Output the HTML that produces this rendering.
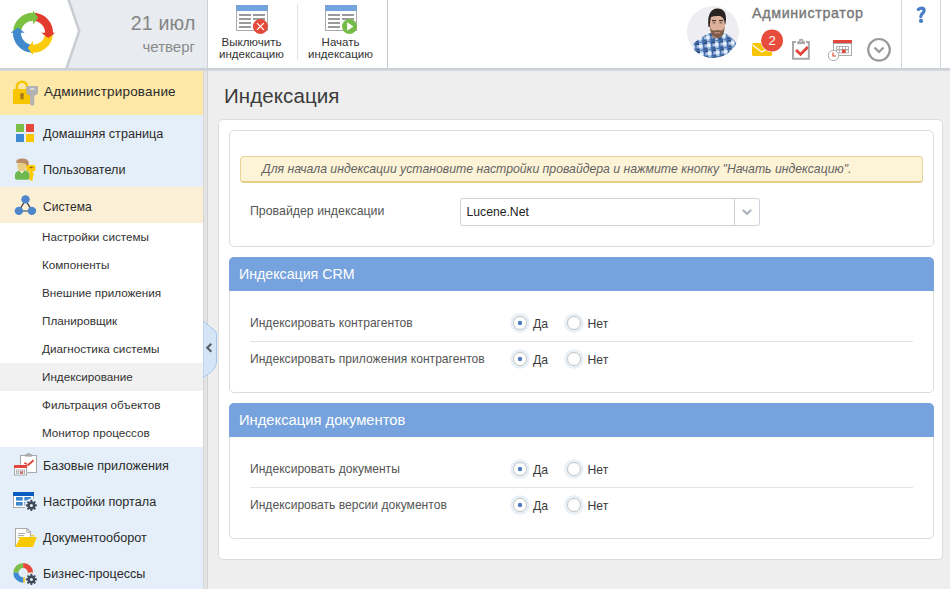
<!DOCTYPE html>
<html><head><meta charset="utf-8">
<style>
*{box-sizing:border-box}
html,body{margin:0;padding:0}
body{width:950px;height:589px;overflow:hidden;position:relative;background:#eeeeee;font-family:"Liberation Sans",sans-serif;color:#333}
.a{position:absolute}
.t{position:absolute;white-space:nowrap;line-height:1}
</style></head><body>

<!-- HEADER -->
<div class="a" style="left:0;top:0;width:950px;height:68px;background:#fff"></div>
<svg class="a" style="left:0;top:0" width="950" height="71" viewBox="0 0 950 71">
  <polygon points="68,0 207,0 207,68 66,68 79,31" fill="#e8ebef"/>
  <polyline points="68.3,-1 79.3,31 66.3,69" fill="none" stroke="#cacdd2" stroke-width="2.6"/>
  <rect x="207" y="0" width="1" height="68" fill="#cdd0d5"/>
  <rect x="297" y="4" width="1" height="56" fill="#e1e3e6"/>
  <rect x="387" y="0" width="1" height="68" fill="#c8ccd1"/>
  <rect x="901" y="0" width="1" height="68" fill="#d3d6da"/>
  <rect x="940" y="0" width="1" height="68" fill="#d3d6da"/>
  <rect x="0" y="68" width="950" height="2" fill="#cdd1d6"/>
  <rect x="0" y="70" width="950" height="1" fill="#d6dbe1"/>
  <!-- logo -->
  <path d="M17.04 31.68A16 16 0 0 1 33.84 16.82" stroke="#7cc142" stroke-width="8" fill="none"/>
  <path d="M34.12 16.84A16 16 0 0 1 48.98 33.64" stroke="#e23b2e" stroke-width="8" fill="none"/>
  <path d="M48.96 33.92A16 16 0 0 1 32.16 48.78" stroke="#fccb0b" stroke-width="8" fill="none"/>
  <path d="M31.88 48.76A16 16 0 0 1 17.02 31.96" stroke="#3f89cc" stroke-width="8" fill="none"/>
  <path d="M33.00 24.50L33.00 10.50L38.21 17.67Z" fill="#7cc142"/>
  <path d="M41.30 32.80L55.30 32.80L48.13 38.01Z" fill="#e23b2e"/>
  <path d="M33.00 41.10L33.00 55.10L27.79 47.93Z" fill="#fccb0b"/>
  <path d="M24.70 32.80L10.70 32.80L17.87 27.59Z" fill="#3f89cc"/>

  <!-- toolbar icon 1 -->
  <g transform="translate(236,5)">
    <rect x="0.5" y="0.5" width="31" height="25" fill="#fff" stroke="#a9abad"/>
    <rect x="0" y="0" width="32" height="6" fill="#74a3de" rx="1"/>
    <rect x="3" y="9" width="12" height="2" fill="#999b9d"/>
    <rect x="17" y="9" width="12" height="2" fill="#999b9d"/>
    <rect x="3" y="13" width="12" height="2" fill="#999b9d"/>
    <rect x="17" y="13" width="12" height="2" fill="#999b9d"/>
    <rect x="3" y="17" width="12" height="2" fill="#999b9d"/>
    <rect x="3" y="21" width="12" height="2" fill="#999b9d"/>
    <circle cx="24.4" cy="21.5" r="7.5" fill="#e44b3b"/>
    <path d="M21 18.1L27.8 24.9M27.8 18.1L21 24.9" stroke="#fff" stroke-width="1.3"/>
  </g>
  <!-- toolbar icon 2 -->
  <g transform="translate(325,5)">
    <rect x="0.5" y="0.5" width="31" height="25" fill="#fff" stroke="#a9abad"/>
    <rect x="0" y="0" width="32" height="6" fill="#74a3de" rx="1"/>
    <rect x="3" y="9" width="12" height="2" fill="#999b9d"/>
    <rect x="17" y="9" width="12" height="2" fill="#999b9d"/>
    <rect x="3" y="13" width="12" height="2" fill="#999b9d"/>
    <rect x="17" y="13" width="12" height="2" fill="#999b9d"/>
    <rect x="3" y="17" width="12" height="2" fill="#999b9d"/>
    <rect x="3" y="21" width="12" height="2" fill="#999b9d"/>
    <circle cx="24.5" cy="21.5" r="7.5" fill="#75bb48"/>
    <path d="M22.2 17.2L28.5 21.5L22.2 25.8Z" fill="#fff"/>
  </g>
</svg>

<div class="t" style="left:100px;width:95.5px;text-align:right;top:14px;font-size:19.5px;color:#858585;letter-spacing:0.2px">21 июл</div>
<div class="t" style="left:100px;width:95px;text-align:right;top:38.5px;font-size:15px;color:#8a8a8a">четверг</div>

<div class="t" style="left:207px;width:89px;text-align:center;top:36.3px;font-size:11.5px;color:#333;line-height:12px">Выключить<br>индексацию</div>
<div class="t" style="left:296px;width:89px;text-align:center;top:36.3px;font-size:11.5px;color:#333;line-height:12px">Начать<br>индексацию</div>


<!-- right header -->
<svg class="a" style="left:687px;top:6px" width="52" height="52" viewBox="0 0 52 52">
  <defs><clipPath id="av"><circle cx="26" cy="26" r="26"/></clipPath>
  <pattern id="plaid" width="8" height="8" patternUnits="userSpaceOnUse" patternTransform="rotate(-6)">
    <rect width="8" height="8" fill="#5a82bb"/>
    <rect x="0" y="0" width="8" height="3" fill="#a9c4e6"/>
    <rect x="0" y="0" width="3" height="8" fill="#adc8ea"/>
    <rect x="0" y="0" width="3" height="3" fill="#eef4fb"/>
    <rect x="4" y="4" width="4" height="4" fill="#2a4a7c"/>
    <rect x="4" y="0" width="1.3" height="8" fill="#3c62a0"/>
    <rect x="0" y="5" width="8" height="1" fill="#4d74b0"/>
  </pattern></defs>
  <g clip-path="url(#av)">
    <rect width="52" height="52" fill="#eeeef2"/>
    <path d="M3 52 L6 38 Q12 32 23 27 L37 27 Q45 30 49 37 L52 52Z" fill="url(#plaid)"/>
    <path d="M23 27 L27 34 L30 31 L33 34 L37 27Z" fill="#1f3660" opacity="0.6"/>
    <path d="M25.5 25 L25.5 31 Q30 34 34.5 30 L34.5 25Z" fill="#c39680"/>
    <path d="M22.5 17 Q22 8 30 8 Q38 8 38 17 Q38 25 35 29 Q32 31.5 30 31.5 Q27 31.5 25 29 Q22.5 25 22.5 17Z" fill="#dcb09a"/>
    <path d="M23 20 Q23.5 28 26 30 Q28 32 30.5 32 Q33 32 35 30 Q37.5 27 37.5 20 Q36.5 25 34 24.5 Q30.5 23.5 27 24.5 Q24 25 23 20Z" fill="#7d5d4a"/>
    <path d="M27 26.5 Q30.5 25.5 33.5 26.5 L33 27.5 Q30.5 27 27.5 27.5Z" fill="#c99a86"/>
    <rect x="25" y="14" width="4" height="1.1" fill="#3a2c26"/>
    <rect x="32" y="14" width="4" height="1.1" fill="#3a2c26"/>
    <rect x="25.8" y="16.3" width="2.5" height="1" fill="#5a463e"/>
    <rect x="32.6" y="16.3" width="2.5" height="1" fill="#5a463e"/>
    <path d="M21.5 21 Q19.5 5 29 2.5 Q39.5 1.5 39 14 Q38.5 18 38 19 Q37.5 11 33 10 Q27 9.5 24 11 Q23 15 22.8 21Z" fill="#2b2321"/>
  </g>
</svg>
<div class="t" style="left:752px;top:5.5px;font-size:14.3px;letter-spacing:0.65px;-webkit-text-stroke:0.35px #777;color:#777">Администратор</div>

<svg class="a" style="left:745px;top:28px" width="150" height="36" viewBox="745 28 150 36">
  <!-- envelope -->
  <rect x="752" y="43" width="20" height="13" rx="1.5" fill="#f8c600"/>
  <path d="M752.5 45 L761 51.5 Q762 52.3 763 51.5 L771.5 45" stroke="#fff" stroke-width="1.2" fill="none"/>
  <circle cx="772" cy="40.5" r="11.5" fill="#fff"/>
  <circle cx="772" cy="40.5" r="11" fill="#e74c3c"/>
  <!-- clipboard -->
  <path d="M796 42.1 L793 42.1 L793 58.8 L808.8 58.8 L808.8 42.1 L806 42.1" fill="none" stroke="#a8a8a8" stroke-width="2"/>
  <rect x="797.2" y="41.2" width="7.8" height="2.9" fill="#a8a8a8"/>
  <rect x="799" y="39" width="4.2" height="2.5" rx="0.8" fill="#a8a8a8"/>
  <rect x="800.3" y="40.7" width="1.6" height="1.2" fill="#e8e8e8"/>
  <path d="M796 50 L800.6 54.3 L807.8 47" stroke="#e0453a" stroke-width="2.8" fill="none"/>
  <!-- calendar -->
  <rect x="833" y="40" width="19" height="4" fill="#e4463b"/>
  <rect x="833.5" y="43.5" width="18" height="12" fill="#fff" stroke="#aaa"/>
  <rect x="836" y="46" width="13" height="7.5" fill="#b4b4b4"/>
  <g fill="#fff">
    <rect x="837" y="47" width="2" height="2"/><rect x="840" y="47" width="2" height="2"/><rect x="843" y="47" width="2" height="2"/><rect x="846" y="47" width="2" height="2"/>
    <rect x="837" y="50.5" width="2" height="2"/><rect x="840" y="50.5" width="2" height="2"/><rect x="846" y="50.5" width="2" height="2"/>
  </g>
  <rect x="842" y="49.5" width="3.5" height="3.5" fill="#e4463b"/>
  <circle cx="833.5" cy="55.5" r="5.2" fill="#fff" stroke="#aaa" stroke-width="1"/>
  <path d="M833 52.5 L833 56 L836 56" stroke="#e4463b" stroke-width="1.2" fill="none"/>
  <!-- circle chevron -->
  <circle cx="879" cy="49.8" r="10.8" fill="none" stroke="#999" stroke-width="2.2"/>
  <path d="M874.5 47.5 L879 52 L883.5 47.5" stroke="#999" stroke-width="2.2" fill="none"/>
</svg>
<div class="t" style="left:761px;top:34px;width:22px;text-align:center;font-size:13px;color:#fff">2</div>
<svg class="a" style="left:905px;top:0" width="30" height="30" viewBox="0 0 30 30"><path d="M13.3 9.4 Q15 8 17 8.1 Q19.2 8.3 19.1 10.6 Q19 12.1 17.4 13.4 Q15.7 14.8 15.8 16.6" stroke="#4a7ec6" stroke-width="3.2" fill="none" stroke-linecap="round"/><circle cx="16" cy="20.9" r="2.1" fill="#4a7ec6"/></svg>


<!-- SIDEBAR -->
<div class="a" style="left:0;top:71px;width:203px;height:44px;background:#fde8a8"></div>
<div class="a" style="left:0;top:115px;width:203px;height:72px;background:#e5eff9"></div>
<div class="a" style="left:0;top:187px;width:203px;height:36px;background:#fbefd6"></div>
<div class="a" style="left:0;top:223px;width:203px;height:224px;background:#fff"></div>
<div class="a" style="left:0;top:363px;width:203px;height:28px;background:#f1f1f1"></div>
<div class="a" style="left:0;top:447px;width:203px;height:142px;background:#e5eff9"></div>
<div class="a" style="left:203px;top:71px;width:1px;height:518px;background:#d6d6d6"></div>
<div class="a" style="left:204px;top:71px;width:3px;height:518px;background:#e4e4e4"></div>
<div class="a" style="left:207px;top:71px;width:1px;height:518px;background:#d2d2d2"></div>

<div class="t" style="left:44px;top:85px;font-size:13.5px;letter-spacing:0.18px;color:#2b2b2b">Администрирование</div>
<div class="t" style="left:43px;top:128px;font-size:12.65px;color:#2b2b2b">Домашняя страница</div>
<div class="t" style="left:43px;top:164px;font-size:12.65px;color:#2b2b2b">Пользователи</div>
<div class="t" style="left:43px;top:200.5px;font-size:12.1px;color:#2b2b2b">Система</div>
<div class="t" style="left:42px;top:230.5px;font-size:11.7px;color:#333">Настройки системы</div>
<div class="t" style="left:42px;top:258.5px;font-size:11.7px;color:#333">Компоненты</div>
<div class="t" style="left:42px;top:286.5px;font-size:11.7px;color:#333">Внешние приложения</div>
<div class="t" style="left:42px;top:314.5px;font-size:11.7px;color:#333">Планировщик</div>
<div class="t" style="left:42px;top:342.5px;font-size:11.7px;color:#333">Диагностика системы</div>
<div class="t" style="left:42px;top:370.5px;font-size:11.7px;color:#333">Индексирование</div>
<div class="t" style="left:42px;top:398.5px;font-size:11.7px;color:#333">Фильтрация объектов</div>
<div class="t" style="left:42px;top:426.5px;font-size:11.7px;color:#333">Монитор процессов</div>
<div class="t" style="left:43px;top:460px;font-size:12.65px;color:#2b2b2b">Базовые приложения</div>
<div class="t" style="left:43px;top:496px;font-size:12.65px;color:#2b2b2b">Настройки портала</div>
<div class="t" style="left:43px;top:532px;font-size:12.65px;color:#2b2b2b">Документооборот</div>
<div class="t" style="left:43px;top:568px;font-size:12.65px;color:#2b2b2b">Бизнес-процессы</div>

<svg class="a" style="left:0;top:71px" width="203" height="518" viewBox="0 71 203 518">
  <!-- lock + key -->
  <path d="M16.9 89.5 L16.9 86.8 A5.1 5.1 0 0 1 27.1 86.8 L27.1 89.5" stroke="#f8c600" stroke-width="2.5" fill="none"/>
  <rect x="13" y="89" width="17.5" height="15" rx="1" fill="#f8c600"/>
  <circle cx="22" cy="95" r="2" fill="#a57d18"/>
  <path d="M21 95 L20.2 99.3 L23.8 99.3 L23 95Z" fill="#a57d18"/>
  <path d="M26.3 87.2 Q26.3 86 27.5 86 L36.8 86 Q38 86 38 87.2 L38 92.5 Q38 93.6 37 94.3 L34.2 96 L34.2 97.5 L35 98.2 L34.2 99 L34.2 104.5 Q34.2 105.5 32.2 105.5 Q30.2 105.5 30.2 104.5 L30.2 96 L27.3 94.3 Q26.3 93.6 26.3 92.5Z" fill="#b2b2b2"/>
  <rect x="30" y="88.2" width="4.5" height="1.6" rx="0.8" fill="#e6e6e6"/>
  <!-- squares -->
  <rect x="16" y="124" width="8" height="8" fill="#7cbf4a"/>
  <rect x="26" y="124" width="8" height="8" fill="#e8473b"/>
  <rect x="16" y="134" width="8" height="8" fill="#3e8bd3"/>
  <rect x="26" y="134" width="8" height="8" fill="#fcc800"/>
  <!-- user -->
  <path d="M14.9 176 Q14.9 171 20 170.5 L25.5 170.5 Q29.6 171 29.6 176 L29.6 178 Q29.6 179.8 27.6 179.8 L16.9 179.8 Q14.9 179.8 14.9 178Z" fill="#6db84f"/>
  <path d="M19.3 170.8 L21.8 173.4 L24.4 170.8Z" fill="#fff"/>
  <ellipse cx="21.8" cy="166" rx="4.6" ry="5.6" fill="#e7cd85"/>
  <path d="M15.9 162.8 Q16.5 158.6 22 158.6 Q28.7 158.6 29 163.5 L27 168 Q26.5 163 22.5 163 Q18.5 162.7 15.9 162.8Z" fill="#b98e66"/>
  <rect x="26.4" y="165" width="9" height="6.2" rx="1.5" fill="#fcc800"/>
  <rect x="29.6" y="170" width="3.2" height="10.6" rx="0.6" fill="#fcc800"/>
  <rect x="32" y="173.5" width="1.8" height="2.2" fill="#fcc800"/>
  <ellipse cx="31.3" cy="167.4" rx="1.7" ry="0.75" fill="#7d6118"/>
  <!-- system -->
  <path d="M25.5 200 L18.9 210.9 L31.9 210.9Z" fill="none" stroke="#3a3f44" stroke-width="1.3"/>
  <rect x="22" y="210.2" width="7" height="1.4" fill="#8a9aa0"/>
  <circle cx="25.5" cy="199.4" r="4.2" fill="#4d86cc"/>
  <circle cx="18.9" cy="210.9" r="4.2" fill="#4d86cc"/>
  <circle cx="31.9" cy="210.9" r="4.2" fill="#4d86cc"/>
</svg>


<!-- sidebar collapse tab -->
<svg class="a" style="left:203px;top:320px" width="15" height="59" viewBox="203 320 15 59">
  <path d="M203 321 L213 329 Q216.5 331.5 216.5 334 L216.5 363 Q215 371 203 377.5Z" fill="#d5e5f8" stroke="#a9c5e8" stroke-width="1"/>
  <path d="M211.3 343.8 L207.3 347.8 L211.3 351.8" stroke="#555c66" stroke-width="2.1" fill="none"/>
</svg>

<!-- CONTENT -->
<div class="t" style="left:224px;top:86px;font-size:20.5px;letter-spacing:0.1px;color:#3b3b3b">Индексация</div>

<div class="a" style="left:218px;top:119px;width:725px;height:441px;background:#fff;border:1px solid #dcdcdc;border-radius:5px"></div>

<!-- panel 1 -->
<div class="a" style="left:229px;top:130px;width:705px;height:117px;background:#fff;border:1px solid #dcdcdc;border-radius:5px"></div>
<div class="a" style="left:240px;top:156px;width:683px;height:27px;background:#fdf4d8;border:1px solid #e8d497;border-bottom:2px solid #e6cf8a;border-radius:4px"></div>
<div class="t" style="left:262px;top:163px;font-size:12.25px;font-style:italic;color:#636363">Для начала индексации установите настройки провайдера и нажмите кнопку "Начать индексацию".</div>
<div class="t" style="left:250px;top:205px;font-size:12.35px;color:#555">Провайдер индексации</div>
<div class="a" style="left:460px;top:198px;width:300px;height:28px;background:#fff;border:1px solid #ccd3db;border-radius:3px"></div>
<div class="a" style="left:734px;top:199px;width:1px;height:26px;background:#ccd3db"></div>
<svg class="a" style="left:740px;top:206px" width="14" height="12" viewBox="0 0 14 12"><path d="M2.8 3.8 L7 8 L11.2 3.8" stroke="#a3a9b0" stroke-width="1.8" fill="none"/></svg>
<div class="t" style="left:466.5px;top:206px;font-size:12.2px;color:#222">Lucene.Net</div>

<!-- panel CRM -->
<div class="a" style="left:229px;top:257px;width:705px;height:136px;background:#fff;border:1px solid #dcdcdc;border-radius:5px"></div>
<div class="a" style="left:229px;top:257px;width:705px;height:34px;background:#76a3dd;border-radius:5px 5px 0 0"></div>
<div class="t" style="left:239px;top:267px;font-size:14.2px;color:#fff">Индексация CRM</div>
<div class="t" style="left:250px;top:317px;font-size:12.1px;color:#555">Индексировать контрагентов</div>
<div class="a" style="left:250px;top:341px;width:663px;height:1px;background:#e3e3e3"></div>
<div class="t" style="left:250px;top:353px;font-size:12.1px;color:#555">Индексировать приложения контрагентов</div>

<!-- panel docs -->
<div class="a" style="left:229px;top:403px;width:705px;height:136px;background:#fff;border:1px solid #dcdcdc;border-radius:5px"></div>
<div class="a" style="left:229px;top:403px;width:705px;height:34px;background:#76a3dd;border-radius:5px 5px 0 0"></div>
<div class="t" style="left:239px;top:412.6px;font-size:14.75px;color:#fff">Индексация документов</div>
<div class="t" style="left:250px;top:463px;font-size:12.1px;color:#555">Индексировать документы</div>
<div class="a" style="left:250px;top:487px;width:663px;height:1px;background:#e3e3e3"></div>
<div class="t" style="left:250px;top:499px;font-size:12.1px;color:#555">Индексировать версии документов</div>
<svg class="a" style="left:509px;top:312px" width="22" height="22" viewBox="0 0 22 22"><circle cx="11" cy="11" r="9.8" fill="#e9eff7"/><circle cx="11" cy="11" r="6.5" fill="#fff" stroke="#c4c4c4"/><circle cx="11" cy="11" r="2.2" fill="#4a7dc0"/></svg>
<div class="t" style="left:533px;top:318px;font-size:12.2px;color:#3a3a3a">Да</div>
<svg class="a" style="left:563px;top:312px" width="22" height="22" viewBox="0 0 22 22"><circle cx="11" cy="11" r="9.8" fill="#e9eff7"/><circle cx="11" cy="11" r="6.5" fill="#fff" stroke="#c4c4c4"/></svg>
<div class="t" style="left:587.5px;top:318px;font-size:12.2px;color:#3a3a3a">Нет</div>
<svg class="a" style="left:509px;top:348px" width="22" height="22" viewBox="0 0 22 22"><circle cx="11" cy="11" r="9.8" fill="#e9eff7"/><circle cx="11" cy="11" r="6.5" fill="#fff" stroke="#c4c4c4"/><circle cx="11" cy="11" r="2.2" fill="#4a7dc0"/></svg>
<div class="t" style="left:533px;top:354px;font-size:12.2px;color:#3a3a3a">Да</div>
<svg class="a" style="left:563px;top:348px" width="22" height="22" viewBox="0 0 22 22"><circle cx="11" cy="11" r="9.8" fill="#e9eff7"/><circle cx="11" cy="11" r="6.5" fill="#fff" stroke="#c4c4c4"/></svg>
<div class="t" style="left:587.5px;top:354px;font-size:12.2px;color:#3a3a3a">Нет</div>
<svg class="a" style="left:509px;top:458px" width="22" height="22" viewBox="0 0 22 22"><circle cx="11" cy="11" r="9.8" fill="#e9eff7"/><circle cx="11" cy="11" r="6.5" fill="#fff" stroke="#c4c4c4"/><circle cx="11" cy="11" r="2.2" fill="#4a7dc0"/></svg>
<div class="t" style="left:533px;top:464px;font-size:12.2px;color:#3a3a3a">Да</div>
<svg class="a" style="left:563px;top:458px" width="22" height="22" viewBox="0 0 22 22"><circle cx="11" cy="11" r="9.8" fill="#e9eff7"/><circle cx="11" cy="11" r="6.5" fill="#fff" stroke="#c4c4c4"/></svg>
<div class="t" style="left:587.5px;top:464px;font-size:12.2px;color:#3a3a3a">Нет</div>
<svg class="a" style="left:509px;top:494px" width="22" height="22" viewBox="0 0 22 22"><circle cx="11" cy="11" r="9.8" fill="#e9eff7"/><circle cx="11" cy="11" r="6.5" fill="#fff" stroke="#c4c4c4"/><circle cx="11" cy="11" r="2.2" fill="#4a7dc0"/></svg>
<div class="t" style="left:533px;top:500px;font-size:12.2px;color:#3a3a3a">Да</div>
<svg class="a" style="left:563px;top:494px" width="22" height="22" viewBox="0 0 22 22"><circle cx="11" cy="11" r="9.8" fill="#e9eff7"/><circle cx="11" cy="11" r="6.5" fill="#fff" stroke="#c4c4c4"/></svg>
<div class="t" style="left:587.5px;top:500px;font-size:12.2px;color:#3a3a3a">Нет</div>


<svg class="a" style="left:0;top:440px" width="50" height="149" viewBox="0 440 50 149">
  <!-- base apps -->
  <rect x="20.5" y="455.5" width="16" height="17" fill="#fff" stroke="#aaa" stroke-width="1.1"/>
  <rect x="25.3" y="454" width="6.6" height="2.6" fill="#aaa"/>
  <circle cx="28.6" cy="454" r="1.2" fill="#aaa"/>
  <path d="M24.5 462.8 L27.8 465.3 L33.6 460.2" stroke="#e4463b" stroke-width="1.8" fill="none"/>
  <rect x="13.5" y="464.5" width="14" height="12" fill="#e4eefa"/>
  <rect x="14.5" y="465.5" width="12" height="9.5" fill="#fff" stroke="#aaa" stroke-width="1"/>
  <rect x="14" y="465" width="13" height="3" fill="#e4463b"/>
  <rect x="16" y="469.5" width="9" height="4.5" fill="#aaa"/>
  <g fill="#fff"><rect x="16.8" y="470.2" width="1.3" height="1.3"/><rect x="18.8" y="470.2" width="1.3" height="1.3"/><rect x="20.8" y="470.2" width="1.3" height="1.3"/><rect x="22.8" y="470.2" width="1.3" height="1.3"/>
  <rect x="16.8" y="472.2" width="1.3" height="1.3"/><rect x="18.8" y="472.2" width="1.3" height="1.3"/><rect x="22.8" y="472.2" width="1.3" height="1.3"/></g>
  <rect x="20.6" y="471.5" width="2" height="2" fill="#e4463b"/>
  <!-- portal settings -->
  <rect x="13.5" y="492.5" width="20" height="15" fill="#fff" stroke="#aaa" stroke-width="1"/>
  <rect x="13" y="492" width="21" height="4" fill="#0b5cc1"/>
  <rect x="16" y="497" width="6.7" height="3.6" fill="#3b86cf"/>
  <rect x="24.3" y="497" width="6.7" height="3.6" fill="#3b86cf"/>
  <rect x="16" y="502" width="6.7" height="3.6" fill="#3b86cf"/>
  <rect x="24.3" y="502" width="6.7" height="3.6" fill="#3b86cf"/>
  <circle cx="31.4" cy="505.4" r="6.8" fill="#e4eefa"/>
  <path d="M35.26 504.33 L36.94 504.56 L36.94 506.24 L35.26 506.47 L34.88 507.37 L35.91 508.72 L34.72 509.91 L33.37 508.88 L32.47 509.26 L32.24 510.94 L30.56 510.94 L30.33 509.26 L29.43 508.88 L28.08 509.91 L26.89 508.72 L27.92 507.37 L27.54 506.47 L25.86 506.24 L25.86 504.56 L27.54 504.33 L27.92 503.43 L26.89 502.08 L28.08 500.89 L29.43 501.92 L30.33 501.54 L30.56 499.86 L32.24 499.86 L32.47 501.54 L33.37 501.92 L34.72 500.89 L35.91 502.08 L34.88 503.43Z" fill="#3d4a57"/>
  <circle cx="31.4" cy="505.4" r="1.5" fill="#e4eefa"/>
  <!-- docs -->
  <path d="M15.5 528.5 L27 528.5 L30.5 532 L30.5 546.5 L15.5 546.5Z" fill="#fff" stroke="#aaa" stroke-width="1.1"/>
  <path d="M26.8 528.5 L26.8 532.3 L30.5 532.3" fill="none" stroke="#aaa" stroke-width="1"/>
  <rect x="18" y="533" width="7" height="1" fill="#aaa"/>
  <rect x="18" y="535" width="6" height="1" fill="#aaa"/>
  <rect x="18" y="537" width="2" height="1" fill="#aaa"/>
  <path d="M30 535 L33.8 535 L33.8 537 Z" fill="#f8c800"/>
  <path d="M15.3 547 L20.4 537 L36.8 537 L33 547Z" fill="#f8c800"/>
  <!-- business processes -->
  <path d="M13.3 572.8 A9.9 9.9 0 0 1 23.2 562.9 L23.2 568.1 A4.7 4.7 0 0 0 18.5 572.8Z" fill="#7cbf4a"/>
  <path d="M23.2 562.9 A9.9 9.9 0 0 1 33.1 572.8 L27.9 572.8 A4.7 4.7 0 0 0 23.2 568.1Z" fill="#e8473b"/>
  <path d="M33.1 572.8 A9.9 9.9 0 0 1 23.2 582.7 L23.2 577.5 A4.7 4.7 0 0 0 27.9 572.8Z" fill="#fcc800"/>
  <path d="M23.2 582.7 A9.9 9.9 0 0 1 13.3 572.8 L18.5 572.8 A4.7 4.7 0 0 0 23.2 577.5Z" fill="#3e8bd3"/>
  <circle cx="31.4" cy="579.4" r="6.8" fill="#e4eefa"/>
  <path d="M35.26 578.33 L36.94 578.56 L36.94 580.24 L35.26 580.47 L34.88 581.37 L35.91 582.72 L34.72 583.91 L33.37 582.88 L32.47 583.26 L32.24 584.94 L30.56 584.94 L30.33 583.26 L29.43 582.88 L28.08 583.91 L26.89 582.72 L27.92 581.37 L27.54 580.47 L25.86 580.24 L25.86 578.56 L27.54 578.33 L27.92 577.43 L26.89 576.08 L28.08 574.89 L29.43 575.92 L30.33 575.54 L30.56 573.86 L32.24 573.86 L32.47 575.54 L33.37 575.92 L34.72 574.89 L35.91 576.08 L34.88 577.43Z" fill="#3d4a57"/>
  <circle cx="31.4" cy="579.4" r="1.5" fill="#e4eefa"/>
</svg>

</body></html>
